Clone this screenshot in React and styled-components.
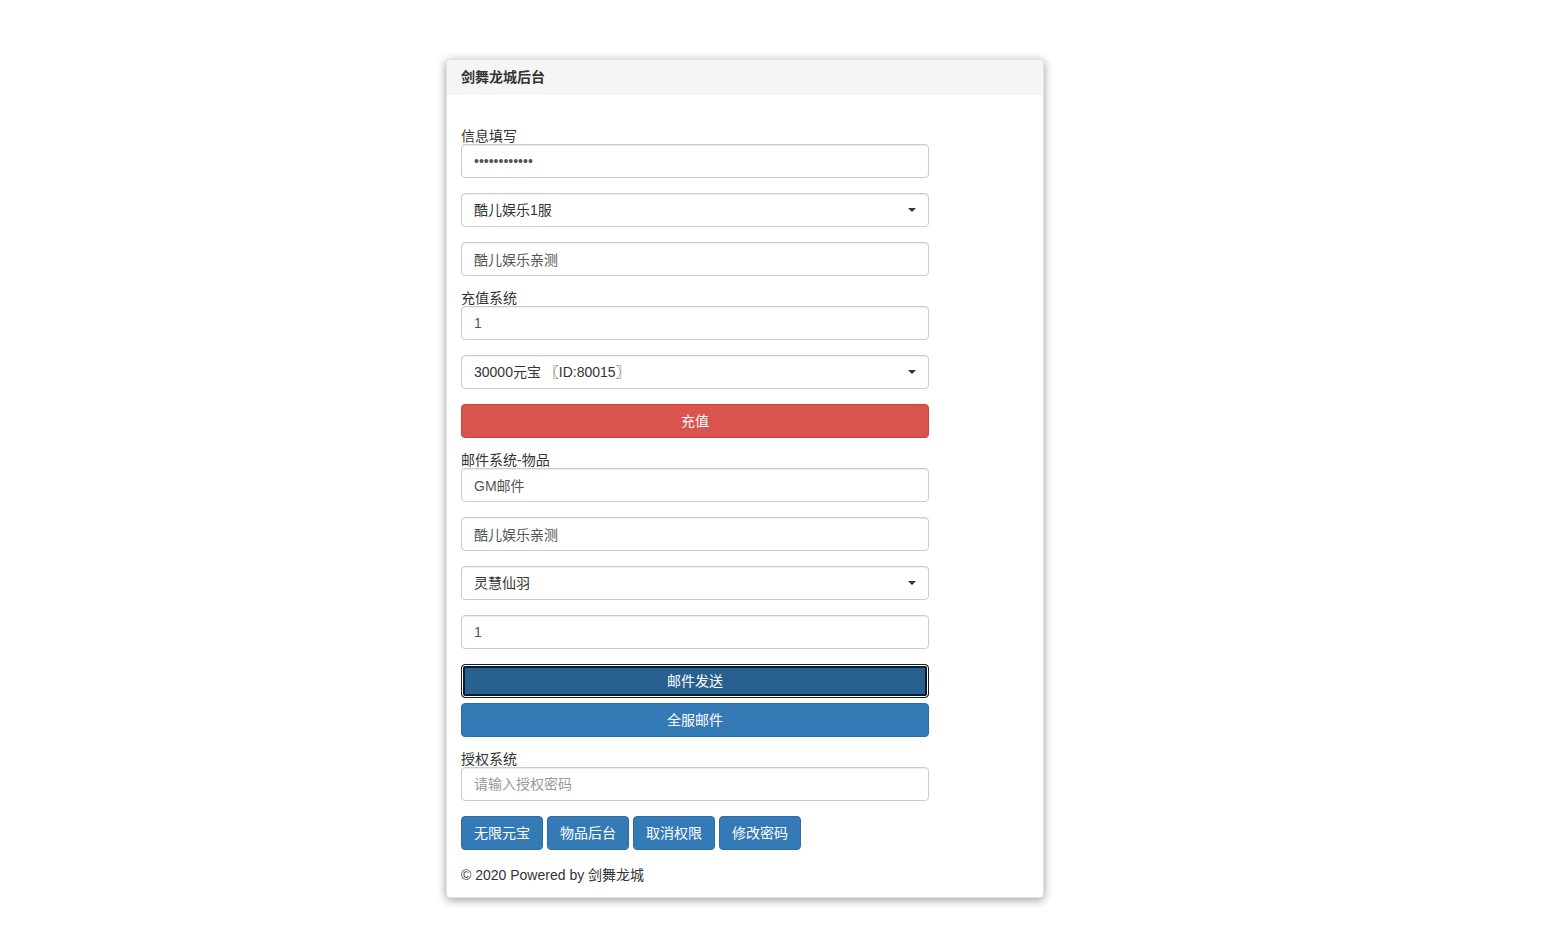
import React from "react";
import styled, { createGlobalStyle } from "styled-components";

const Global = createGlobalStyle`
  html, body { margin: 0; padding: 0; background: #fff; }
  body {
    font-family: "Liberation Sans", Arial, "Noto Sans CJK SC", sans-serif;
    font-size: 14px;
    line-height: 20px;
    color: #333;
  }
  * { box-sizing: border-box; }
`;

const Page = styled.div`
  display: flex;
  padding: 59px 0 0 446px;
  min-height: 931px;
`;

const Panel = styled.div`
  width: 598px;
  background: #fff;
  border: 1px solid #e2e2e2;
  border-radius: 4px;
  box-shadow: 0 2px 10px rgba(0, 0, 0, 0.4);
  align-self: flex-start;
`;

const Heading = styled.div`
  height: 35px;
  display: flex;
  align-items: center;
  padding: 0 14px 2px;
  background: #f5f5f5;
  border-radius: 3px 3px 0 0;
  font-size: 14px;
  font-weight: bold;
  color: #333;
`;

const Body = styled.div`
  padding: 29px 14px 12px;
  display: flex;
  flex-direction: column;
  width: 496px;
`;

const Label = styled.label`
  display: block;
  line-height: 24px;
  height: 20px;
  color: #333;
  margin-top: ${(p) => p.$mt || 0}px;
`;

const Input = styled.input`
  display: block;
  width: 468px;
  height: 34px;
  padding: 6px 12px;
  font-family: inherit;
  font-size: 14px;
  line-height: 20px;
  color: #555;
  background: #fff;
  border: 1px solid #ccc;
  border-radius: 4px;
  box-shadow: inset 0 1px 1px rgba(0, 0, 0, 0.075);
  outline: none;
  margin-top: ${(p) => p.$mt || 0}px;
  &::placeholder { color: #999; }
`;

const Select = styled.div`
  position: relative;
  width: 468px;
  height: 34px;
  padding: 6px 12px;
  font-size: 14px;
  line-height: 20px;
  color: #333;
  background: #fff;
  border: 1px solid #ccc;
  border-radius: 4px;
  box-shadow: inset 0 1px 1px rgba(0, 0, 0, 0.075);
  margin-top: ${(p) => p.$mt || 0}px;
  &::after {
    content: "";
    position: absolute;
    right: 12px;
    top: 14px;
    border-left: 4px solid transparent;
    border-right: 4px solid transparent;
    border-top: 4px solid #333;
  }
`;

const Button = styled.button`
  display: block;
  width: ${(p) => (p.$inline ? "auto" : "468px")};
  height: 34px;
  padding: 6px 12px;
  font-family: inherit;
  font-size: 14px;
  line-height: 20px;
  color: #fff;
  border-radius: 4px;
  cursor: pointer;
  margin-top: ${(p) => p.$mt || 0}px;
  background: ${(p) =>
    p.$variant === "danger" ? "#d9534f" : p.$variant === "focus" ? "#286090" : "#337ab7"};
  border: 1px solid
    ${(p) =>
      p.$variant === "danger" ? "#d43f3a" : p.$variant === "focus" ? "#0e2233" : "#2e6da4"};
  box-shadow: ${(p) =>
    p.$variant === "focus" ? "inset 0 0 0 1px #fff, inset 0 0 0 3px #0b1b29" : "none"};
`;

const ButtonRow = styled.div`
  display: flex;
  gap: 4px;
  margin-top: 15px;
`;

const Footer = styled.div`
  margin-top: 15px;
  line-height: 20px;
  color: #333;
`;

export default function App() {
  return (
    <>
      <Global />
      <Page>
        <Panel>
          <Heading>剑舞龙城后台</Heading>
          <Body>
            <Label>信息填写</Label>
            <Input type="password" defaultValue="123456789012" readOnly />
            <Select $mt={15}>酷儿娱乐1服</Select>
            <Input $mt={15} defaultValue="酷儿娱乐亲测" readOnly />
            <Label $mt={10}>充值系统</Label>
            <Input defaultValue="1" readOnly />
            <Select $mt={15}>30000元宝 〖ID:80015〗</Select>
            <Button $mt={15} $variant="danger">充值</Button>
            <Label $mt={10}>邮件系统-物品</Label>
            <Input defaultValue="GM邮件" readOnly />
            <Input $mt={15} defaultValue="酷儿娱乐亲测" readOnly />
            <Select $mt={15}>灵慧仙羽</Select>
            <Input $mt={15} defaultValue="1" readOnly />
            <Button $mt={15} $variant="focus">邮件发送</Button>
            <Button $mt={5}>全服邮件</Button>
            <Label $mt={10}>授权系统</Label>
            <Input placeholder="请输入授权密码" />
            <ButtonRow>
              <Button $inline>无限元宝</Button>
              <Button $inline>物品后台</Button>
              <Button $inline>取消权限</Button>
              <Button $inline>修改密码</Button>
            </ButtonRow>
            <Footer>© 2020 Powered by 剑舞龙城</Footer>
          </Body>
        </Panel>
      </Page>
    </>
  );
}
